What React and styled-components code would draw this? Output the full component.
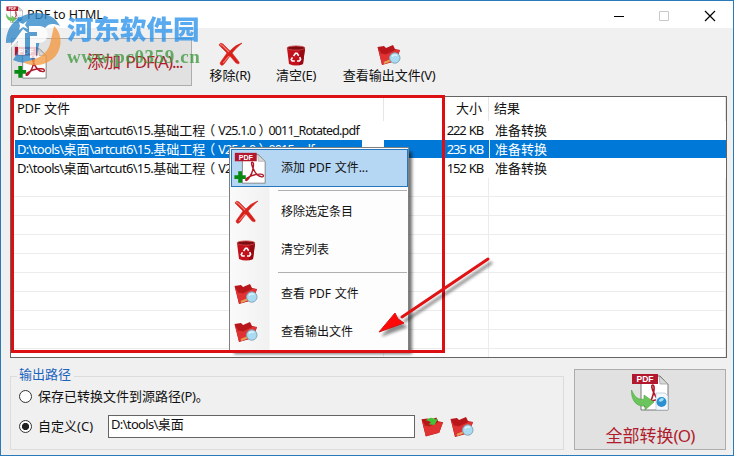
import React from "react";
import styled, { createGlobalStyle, css } from "styled-components";

const files = [
  { path: "D:\\tools\\桌面\\artcut6\\15.基础工程（V25.1.0）0011_Rotated.pdf", size: "222 KB" },
  { path: "D:\\tools\\桌面\\artcut6\\15.基础工程（V25.1.0）0015.pdf", size: "235 KB", selected: true },
  { path: "D:\\tools\\桌面\\artcut6\\15.基础工程（V25.1.0）0018.pdf", size: "152 KB" },
];

const emptyRows = Array.from({ length: 10 }, (_, i) => i);

// latin runs are set tighter than the chinese ones, brackets are centred in their square
function Text({ children, tight = -0.35 }) {
  return children
    .split(/([\x20-\x7e]+|[（）])/)
    .filter(Boolean)
    .map((run, i) => {
      if (/^[（）]/.test(run)) return <Bracket key={i} $open={run === "（"}>{run}</Bracket>;
      if (/^[\x20-\x7e]/.test(run))
        return (
          <Latin key={i} $tight={tight}>
            {run}
          </Latin>
        );
      return <span key={i}>{run}</span>;
    });
}

function PdfPage() {
  return (
    <>
      <path d="M10 3H29L37 11V37H10Z" fill="#fff" stroke="#777" strokeWidth="1" />
      <path d="M28 3L37 11H29Z" fill="#d8d8d8" stroke="#999" strokeWidth=".7" />
      <path
        d="M21.5 12C19.5 13 22 18 23 20C25 25 29 29 33 29.5C36 29.5 35.5 26.5 32 26.3C26 26 19 28.5 15.5 31C12.5 33.5 14.5 35 16.5 32.5C19.5 29 22.5 22 23 17C23.3 14 23 12 21.5 12Z"
        fill="none"
        stroke="#b3182a"
        strokeWidth="1.7"
      />
      <path d="M1 1H27V11H1Z" fill="#b3172e" />
      <text x="14" y="9" textAnchor="middle" fontSize="8.5" fontWeight="700" fontFamily="Liberation Sans, sans-serif" fill="#fff">
        PDF
      </text>
    </>
  );
}

function AddIcon({ size = 33 }) {
  return (
    <svg width={size} height={size} viewBox="0 0 38 38">
      <PdfPage />
      <path d="M5 23H9.5V27.5H14V32H9.5V36.5H5V32H.5V27.5H5Z" fill="#078a12" />
    </svg>
  );
}

function ConvertIcon({ size = 38 }) {
  return (
    <svg width={size} height={size} viewBox="0 0 38 38">
      <PdfPage />
      <path d="M25 20H34L37 23V37H25Z" fill="#f4f8fd" stroke="#a9b8c8" strokeWidth=".6" />
      <circle cx="30.5" cy="29" r="5" fill="#2c8fd0" />
      <path d="M27.5 28Q30 23 33 26Q31 30 27.5 28" fill="#9fe0f6" />
      <path d="M.5 17C4 25 8 27 13 26V22L23 29L14 37V33C6 34 0 28 .5 17Z" fill="#6cc45c" stroke="#4aa542" strokeWidth=".6" />
    </svg>
  );
}

function CrossIcon() {
  return (
    <svg width="24" height="24" viewBox="0 0 24 24">
      <path d="M1 3Q2 0 5 2L12 9Q17 3 24 1Q19 5 14 11L21 20Q22 23 18 21L12 14L6 22Q3 25 2 21L9 11Z" fill="#d9201a" stroke="#d9201a" strokeWidth=".6" />
      <path d="M2 3Q3 2 5 4L11 10M11 14L5 21" fill="none" stroke="#f08a80" strokeWidth="1.1" />
    </svg>
  );
}

function BinIcon() {
  return (
    <svg width="20" height="21" viewBox="0 0 20 21">
      <path d="M1 3L3 19Q10 22 17 19L19 3Z" fill="#c2101c" />
      <path d="M14 4H19L17 19L13 20.3Z" fill="#960812" />
      <ellipse cx="10" cy="3" rx="9" ry="2.1" fill="#7c0c12" stroke="#d44a48" strokeWidth=".8" />
      <path
        d="M7.6 11L9.5 8.2H11L12.7 10.8M13.7 12.2L14.6 14.2L13.5 16H11M8.8 16H6.2L5.2 14.4L6.5 12.3"
        fill="none"
        stroke="#fff"
        strokeWidth="1.6"
      />
    </svg>
  );
}

function FolderShape() {
  return (
    <>
      <path d="M.5 3L7 2L9 4L16 1L18 5L23 6L19 17L5 21Z" fill="#b8161b" />
      <path d="M1 4L4 9L9 10L18 6L23 6L19 17L5 20.5Z" fill="#e03232" />
      <path d="M3.5 9L9 10L17 6" fill="none" stroke="#b31a1c" strokeWidth=".8" />
    </>
  );
}

function FindIcon() {
  return (
    <svg width="24" height="22" viewBox="0 0 24 22">
      <FolderShape />
      <path d="M7 19L13 16.5" stroke="#e2a055" strokeWidth="2.4" />
      <circle cx="17.8" cy="14" r="5.2" fill="#a9dcf2" stroke="#84a7ba" strokeWidth="1" />
      <path d="M15 12.5Q17 10 20 11.5" fill="none" stroke="#e6f8ff" strokeWidth="1.3" />
    </svg>
  );
}

function BrowseIcon() {
  return (
    <svg width="23" height="22" viewBox="0 0 24 22">
      <FolderShape />
      <path d="M5 4Q10 -1 15 3L17.5 3L14 9L8 8L10.5 6Q8 4.5 5 4Z" fill="#43c33a" />
    </svg>
  );
}

function Logo() {
  return (
    <svg width="58" height="56" viewBox="0 0 58 56">
      <path d="M1 31C1 12 15 1 32 1C43 1 51 6 55 14C44 9 40 14 36 24L31 46C25 53 15 51 8 48C12 43 14 37 15 30Z" fill="#3088c9" />
      <path d="M49 14C60 24 57 45 41 51C32 55 22 53 18 50C33 48 42 42 45 32Z" fill="#f39a42" />
      <path d="M2 39L18 17L23 21H20V43H13V29Z" fill="#fff" />
      <path d="M24 14H34C46 14 45 31 34 31H31V46H25V24H32V20H24Z" fill="#fff" />
      <path d="M14 10L18 12L22 9L20 13L23 17L18 15L14 18L15 14Z" fill="#fff" />
    </svg>
  );
}

export default function App() {
  return (
    <Window>
      <GlobalStyle />
      <TitleBar>
        <ConvertIcon size={17} />
        <Title>PDF to HTML</Title>
        <Controls viewBox="0 0 120 16">
          <path d="M9 9.5H19" stroke="#000" />
          <path d="M54.5 4.5H63.5V13.5H54.5Z" fill="none" stroke="#c8c8c8" />
          <path d="M100 4L110 14M110 4L100 14" stroke="#000" strokeWidth="1.2" />
        </Controls>
      </TitleBar>

      <Toolbar>
        <AddButton>
          <AddIcon />
          <AddLabel>
            <Text tight={-1}>添加 PDF(A)...</Text>
          </AddLabel>
        </AddButton>
        <Tool $width={66} $first>
          <CrossIcon />
          <span><Text>移除(R)</Text></span>
        </Tool>
        <Tool $width={66}>
          <BinIcon />
          <span><Text>清空(E)</Text></span>
        </Tool>
        <Tool $width={120}>
          <FindIcon />
          <span><Text>查看输出文件(V)</Text></span>
        </Tool>
      </Toolbar>

      <Table>
        <Header>
          <HeadCell><Text>PDF 文件</Text></HeadCell>
          <HeadCell $right>大小</HeadCell>
          <HeadCell>结果</HeadCell>
        </Header>
        {files.map((file) => (
          <Row key={file.path} $selected={file.selected}>
            <Cell $name><Text tight={-0.68}>{file.path}</Text></Cell>
            <Cell $right><Text tight={-1.15}>{file.size}</Text></Cell>
            <Cell>准备转换</Cell>
          </Row>
        ))}
        {emptyRows.map((i) => (
          <Row key={i} $lined>
            <Cell />
            <Cell />
            <Cell />
          </Row>
        ))}
      </Table>

      <Footer>
        <Output>
          <Legend>输出路径</Legend>
          <Option>
            <Radio />
            <Text>保存已转换文件到源路径(P)。</Text>
          </Option>
          <Option $custom>
            <Radio $checked />
            <CustomLabel><Text tight={0}>自定义(C)</Text></CustomLabel>
            <PathInput><Text tight={-0.65}>D:\tools\桌面</Text></PathInput>
            <BrowseIcon />
            <FindIcon />
          </Option>
        </Output>
        <ConvertButton>
          <ConvertIcon />
          <span><Text tight={-0.8}>全部转换(O)</Text></span>
        </ConvertButton>
      </Footer>

      <Menu>
        <MenuItem $active>
          <MenuIcon $wide><AddIcon size={32} /></MenuIcon>
          <span><Text tight={-0.15}>添加 PDF 文件...</Text></span>
        </MenuItem>
        <Separator />
        <MenuItem>
          <MenuIcon><CrossIcon /></MenuIcon>
          移除选定条目
        </MenuItem>
        <MenuItem>
          <MenuIcon><BinIcon /></MenuIcon>
          清空列表
        </MenuItem>
        <Separator />
        <MenuItem>
          <MenuIcon><FindIcon /></MenuIcon>
          <span><Text tight={-0.15}>查看 PDF 文件</Text></span>
        </MenuItem>
        <MenuItem>
          <MenuIcon><FindIcon /></MenuIcon>
          查看输出文件
        </MenuItem>
      </Menu>

      <Frame />
      <Arrow viewBox="0 0 120 86">
        <path d="M111 6L25 64" stroke="#e01214" strokeWidth="3" strokeLinecap="round" />
        <path d="M2 79L18 60L21 66L27 70Z" fill="#ff0808" stroke="#d81111" strokeWidth="1" />
      </Arrow>

      <Watermark>
        <Logo />
        <div>
          <SiteName>河东软件园</SiteName>
          <SiteUrl>www.pc0359.cn</SiteUrl>
        </div>
      </Watermark>
    </Window>
  );
}

const GlobalStyle = createGlobalStyle`
  * {
    box-sizing: border-box;
  }
  body {
    margin: 0;
    overflow: hidden;
  }
  svg {
    display: block;
    flex: none;
  }
`;

const Window = styled.div`
  position: relative;
  width: 734px;
  height: 456px;
  display: flex;
  flex-direction: column;
  background: #f0f0f0;
  border: 1px solid #2a79b9;
  overflow: hidden;
  color: #111;
  font: 13px/18px "Noto Sans", "Noto Sans CJK SC", sans-serif;
  white-space: pre;
`;

const Latin = styled.span`
  letter-spacing: ${(p) => p.$tight}px;
  word-spacing: 1px;
`;

const Bracket = styled.span`
  display: inline-block;
  width: 13px;
  height: 18px;
  text-indent: ${(p) => (p.$open ? -3 : 3)}px;
  vertical-align: top;
  & ~ ${Latin} {
    font-size: 12.5px;
    letter-spacing: -0.8px;
  }
`;

const TitleBar = styled.header`
  display: flex;
  align-items: center;
  height: 27px;
  padding: 0 8px 0 5px;
  background: #fff;
`;

const Title = styled.span`
  flex: 1;
  margin-left: 4px;
  font-size: 12.5px;
`;

const Controls = styled.svg`
  width: 120px;
  height: 16px;
`;

const Toolbar = styled.div`
  display: flex;
  height: 67px;
  padding: 10px 0 0 10px;
`;

const AddButton = styled.div`
  display: flex;
  align-items: center;
  width: 181px;
  height: 48px;
  padding-left: 2px;
  background: #e1e1e1;
  border: 1px solid #adadad;
`;

const AddLabel = styled.span`
  margin-left: 40px;
  color: #b01c2c;
  font-size: 17px;
`;

const Tool = styled.div`
  display: flex;
  flex-direction: column;
  align-items: center;
  justify-content: flex-end;
  width: ${(p) => p.$width}px;
  height: 46px;
  margin-left: ${(p) => (p.$first ? 5 : 0)}px;
`;

const Table = styled.div`
  width: 717px;
  height: 262px;
  margin: 1px 0 0 9px;
  background: #fff;
  border: 1px solid #646464;
  overflow: hidden;
`;

const columns = css`
  display: grid;
  grid-template-columns: 369px 105px 237px;
  padding-left: 4px;
`;

const Header = styled.div`
  ${columns}
  height: 24px;
`;

const HeadCell = styled.div`
  padding: ${(p) => (p.$right ? "2px 6px 0 0" : "2px 0 0 2px")};
  text-align: ${(p) => (p.$right ? "right" : "left")};
  border-right: 1px solid #e5e5e5;
  &:last-child {
    padding-left: 5px;
  }
`;

const Cell = styled.div`
  height: 19px;
  padding: ${(p) => (p.$right ? "0 6px 0 0" : "0 0 0 2px")};
  margin-right: ${(p) => (p.$name ? 22 : 0)}px;
  text-align: ${(p) => (p.$right ? "right" : "left")};
  overflow: hidden;
  &:last-child {
    padding-left: 6px;
  }
`;

const Row = styled.div`
  ${columns}
  height: 19px;
  ${(p) =>
    p.$selected &&
    css`
      color: #fff;
      ${Cell} {
        height: 18px;
        background: #0078d7;
      }
      ${Cell}:last-child {
        border-left: 1px solid #e5f0fa;
        padding-left: 5px;
      }
    `}
  ${(p) =>
    p.$lined &&
    css`
      border-bottom: 1px solid #ececec;
      ${Cell} {
        border-right: 1px solid #ececec;
      }
    `}
`;

const Footer = styled.div`
  display: flex;
  align-items: flex-end;
  gap: 10px;
  height: 92px;
  padding-left: 9px;
`;

const Output = styled.div`
  width: 554px;
  height: 74px;
  border: 1px solid #dcdcdc;
`;

const Legend = styled.div`
  width: 57px;
  height: 18px;
  margin: -12px 0 1px 6px;
  padding-left: 2px;
  background: #f0f0f0;
  color: #1c63bd;
`;

const Option = styled.div`
  display: flex;
  align-items: center;
  height: ${(p) => (p.$custom ? 36 : 24)}px;
  padding-left: 8px;
  ${(p) => p.$custom && "svg { margin: 2px 0 0 6px; }"}
`;

const Radio = styled.i`
  width: 13px;
  height: 13px;
  margin-right: 6px;
  border: 1px solid #333;
  border-radius: 50%;
  background: ${(p) => (p.$checked ? "radial-gradient(#222 0 3.2px, #fff 4px)" : "#fff")};
`;

const CustomLabel = styled.span`
  width: 70px;
`;

const PathInput = styled.div`
  width: 307px;
  height: 23px;
  padding-left: 2px;
  background: #fff;
  border: 1px solid #646464;
  line-height: 17px;
`;

const ConvertButton = styled.div`
  display: flex;
  flex-direction: column;
  align-items: center;
  width: 152px;
  height: 81px;
  padding-top: 3px;
  background: #e1e1e1;
  border: 1px solid #adadad;
  color: #b01c2c;
  font-size: 17px;
  line-height: 24px;
  span {
    padding-top: 3px;
  }
  svg {
    margin-bottom: 10px;
  }
`;

// context menu opened over the file list
const Menu = styled.div`
  position: absolute;
  top: 146px;
  left: 228px;
  width: 180px;
  height: 204px;
  padding: 1px;
  background: linear-gradient(90deg, #fafafa, #f1f1f1 39px, #fdfdfd 40px);
  border: 1px solid #808080;
  box-shadow: 4px 4px 3px -1px rgba(0, 0, 0, 0.55);
`;

const MenuItem = styled.div`
  display: flex;
  align-items: center;
  height: 38px;
  width: 177px;
  font-size: 12px;
  border: 1px solid ${(p) => (p.$active ? "#2678be" : "transparent")};
  background: ${(p) => (p.$active ? "#b5d7f3" : "transparent")};
`;

const MenuIcon = styled.span`
  display: flex;
  justify-content: center;
  width: ${(p) => (p.$wide ? 35 : 27)}px;
  margin-right: ${(p) => (p.$wide ? 14 : 22)}px;
`;

const Separator = styled.div`
  height: 1px;
  margin: 3px 0 2px 47px;
  background: #b0b0b0;
`;

const Frame = styled.div`
  position: absolute;
  top: 94px;
  left: 10px;
  width: 434px;
  height: 258px;
  border: 3px solid #de0f12;
`;

const Arrow = styled.svg`
  position: absolute;
  top: 252px;
  left: 376px;
  width: 120px;
  height: 86px;
  filter: drop-shadow(3px 4px 1.5px rgba(0, 0, 0, 0.45));
`;

const Watermark = styled.div`
  position: absolute;
  top: 11px;
  left: 4px;
  display: flex;
  gap: 4px;
  opacity: 0.78;
`;

const SiteName = styled.div`
  color: #2d93ec;
  font: 900 26.5px/32px "Noto Sans CJK SC", sans-serif;
`;

const SiteUrl = styled.div`
  margin-top: 2px;
  color: #3f9b40;
  font: 700 19px/22px "Liberation Serif", serif;
  letter-spacing: 0.6px;
`;
